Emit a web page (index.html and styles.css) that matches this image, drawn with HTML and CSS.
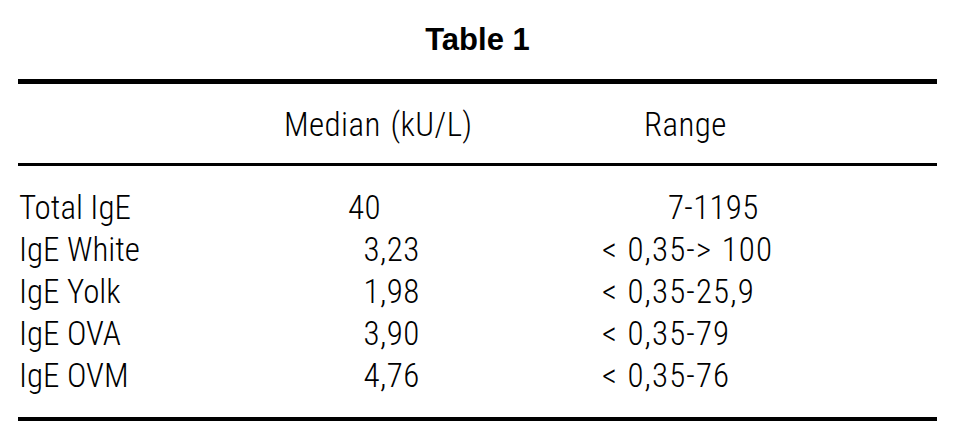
FILE: index.html
```html
<!DOCTYPE html>
<html>
<head>
<meta charset="utf-8">
<title>Table 1</title>
<link rel="stylesheet" href="styles.css">
</head>
<body>
<div class="page">
  <h1 class="title">Table 1</h1>
  <div class="table">
    <div class="row head">
      <div class="cell label"></div>
      <div class="cell median">Median (kU/L)</div>
      <div class="cell range">Range</div>
    </div>
    <div class="body">
      <div class="row">
        <div class="cell label">Total IgE</div>
        <div class="cell num"><span class="int">40</span></div>
        <div class="cell rng wide">7-1195</div>
      </div>
      <div class="row">
        <div class="cell label">IgE White</div>
        <div class="cell num"><span class="int">3</span>,23</div>
        <div class="cell rng">&lt; 0,35-&gt; 100</div>
      </div>
      <div class="row">
        <div class="cell label">IgE Yolk</div>
        <div class="cell num"><span class="int">1</span>,98</div>
        <div class="cell rng">&lt; 0,35-25,9</div>
      </div>
      <div class="row">
        <div class="cell label">IgE OVA</div>
        <div class="cell num"><span class="int">3</span>,90</div>
        <div class="cell rng">&lt; 0,35-79</div>
      </div>
      <div class="row">
        <div class="cell label">IgE OVM</div>
        <div class="cell num"><span class="int">4</span>,76</div>
        <div class="cell rng">&lt; 0,35-76</div>
      </div>
    </div>
  </div>
</div>
</body>
</html>
```
FILE: styles.css
```css
html, body {
  margin: 0;
  padding: 0;
  background: #ffffff;
  color: #000000;
}

.page {
  width: 955px;
  padding-top: 20px;
}

.title {
  margin: 0;
  font-family: "Liberation Sans", Arial, sans-serif;
  font-weight: bold;
  font-size: 31px;
  line-height: 40px;
  text-align: center;
}

.table {
  margin: 19px 0 0 18px;
  width: 919px;
  border-top: 5px solid #000;
  border-bottom: 4px solid #000;
  font-family: "Roboto Condensed", Roboto, sans-serif;
  font-weight: 300;
  font-size: 33px;
  line-height: 42px;
  letter-spacing: 0.4px;
}

.row {
  display: grid;
  grid-template-columns: 250px 310px 359px;
  white-space: nowrap;
}

.head {
  padding: 20px 0 17px;
  border-bottom: 3px solid #000;
}

.body {
  padding: 21px 0 20px;
}

.label {
  padding-left: 1px;
  letter-spacing: 0;
}

.median {
  padding-left: 16px;
  word-spacing: 2px;
}

.range {
  padding-left: 66px;
}

.num {
  padding-left: 80px;
}

.num .int {
  display: inline-block;
  width: 32px;
  text-align: right;
}

.rng {
  padding-left: 24px;
  letter-spacing: 1.1px;
  word-spacing: 1px;
}

.rng.wide {
  padding-left: 90px;
  letter-spacing: 0.3px;
}
```
